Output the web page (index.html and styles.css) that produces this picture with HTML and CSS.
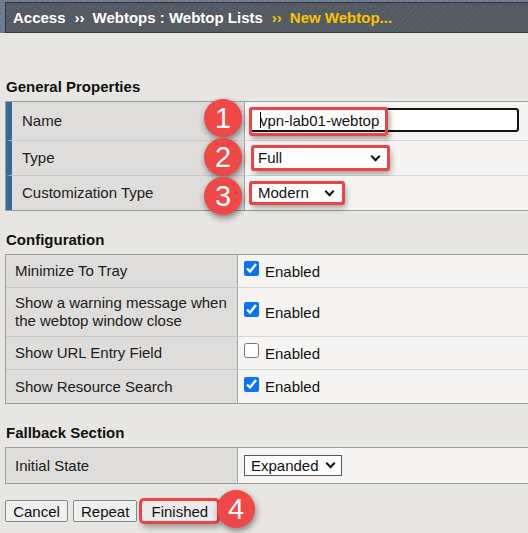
FILE: index.html
```html
<!DOCTYPE html>
<html>
<head>
<meta charset="utf-8">
<title>New Webtop</title>
<link rel="stylesheet" href="styles.css">
</head>
<body>
<header class="topbar">
  <div class="crumbs">
    <span>Access</span><span class="sep">››</span><span>Webtops : Webtop Lists</span><span class="sep cur">››</span><span class="cur">New Webtop...</span>
  </div>
</header>

<main class="content">
  <h2 class="sec sec-first">General Properties</h2>
  <div class="ptable general">
    <div class="lab">Name</div>
    <div class="val">
      <div class="namebox">
        <input class="txt" type="text" value="vpn-lab01-webtop">
        <span class="caret"></span>
        <span class="hl hl-name"></span>
      </div>
    </div>
    <div class="lab">Type</div>
    <div class="val">
      <div class="sel sel-type ring"><span>Full</span><i class="chev"></i></div>
    </div>
    <div class="lab last">Customization Type</div>
    <div class="val last">
      <div class="sel sel-cust ring"><span>Modern</span><i class="chev"></i></div>
    </div>
  </div>

  <h2 class="sec">Configuration</h2>
  <div class="ptable config">
    <div class="lab">Minimize To Tray</div>
    <div class="val"><label class="chk"><input type="checkbox" checked><span>Enabled</span></label></div>
    <div class="lab">Show a warning message when the webtop window close</div>
    <div class="val"><label class="chk"><input type="checkbox" checked><span>Enabled</span></label></div>
    <div class="lab">Show URL Entry Field</div>
    <div class="val"><label class="chk"><input type="checkbox"><span>Enabled</span></label></div>
    <div class="lab last">Show Resource Search</div>
    <div class="val last"><label class="chk"><input type="checkbox" checked><span>Enabled</span></label></div>
  </div>

  <h2 class="sec">Fallback Section</h2>
  <div class="ptable fallback">
    <div class="lab last">Initial State</div>
    <div class="val last">
      <div class="sel sel-exp"><span>Expanded</span><i class="chev"></i></div>
    </div>
  </div>

  <div class="buttons">
    <button class="btn btn-cancel">Cancel</button>
    <button class="btn">Repeat</button>
    <button class="btn btn-fin ring">Finished</button>
  </div>
</main>

<span class="badge b1">1</span>
<span class="badge b2">2</span>
<span class="badge b3">3</span>
<span class="badge b4">4</span>
</body>
</html>
```

FILE: styles.css
```css
* { box-sizing: border-box; }

html, body {
  margin: 0;
  overflow: hidden;
}

body {
  position: relative;
  width: 528px;
  height: 533px;
  background: #e7e6e3;
  font-family: "Liberation Sans", Arial, sans-serif;
  font-size: 15px;
  color: #1e1e1e;
}

/* ---------- top bar ---------- */
.topbar {
  height: 33px;
  padding: 2px 0 0 5px;
  background-color: #6a7b8d;
  background-image: repeating-linear-gradient(135deg, rgba(255,255,255,0.06) 0 1px, transparent 1px 4px);
}

.crumbs {
  height: 31px;
  width: 540px;
  border: 1px solid #30353b;
  border-right: none;
  padding-left: 7px;
  background-color: #545a62;
  background-image: repeating-linear-gradient(135deg, rgba(255,255,255,0.035) 0 1px, transparent 1px 4px);
  color: #ffffff;
  font-weight: bold;
  font-size: 15px;
  line-height: 29px;
  white-space: nowrap;
}

.crumbs .sep {
  margin: 0 8px 0 9px;
}

.crumbs .cur {
  color: #f8c500;
}

/* ---------- content ---------- */
.content {
  padding-left: 5px;
}

.sec {
  margin: 20px 0 5px 1px;
  font-size: 15px;
  line-height: 18px;
  font-weight: bold;
  color: #111;
}

.sec-first {
  margin-top: 45px;
}

.ptable {
  display: grid;
  width: 530px;
  border: 1px solid #9d9d9d;
  border-right: none;
}

.general { grid-template-columns: 239px 1fr; grid-template-rows: 39px 35px 34px; }
.config  { grid-template-columns: 232px 1fr; grid-template-rows: 33px 49px 33px 33px; }
.fallback { grid-template-columns: 232px 1fr; grid-template-rows: 35px; }

.lab {
  display: flex;
  align-items: center;
  background: #dedddb;
  border-right: 1px solid #a6a6a6;
  border-bottom: 1px solid #c9c9c9;
  padding-left: 9px;
  line-height: 18px;
  color: #202020;
}

.general .lab {
  border-left: 6px solid #376896;
  padding-left: 10px;
}

.val {
  display: flex;
  align-items: center;
  background: #f6f5f3;
  border-bottom: 1px solid #d6d6d6;
}

.lab.last, .val.last { border-bottom: none; }

/* name input */
.namebox {
  position: relative;
  margin-left: 4px;
  margin-top: -2px;
}

.txt {
  display: block;
  width: 270px;
  height: 24px;
  border: 2px solid #141414;
  border-radius: 3px;
  padding: 0 0 0 9px;
  font-family: "Liberation Sans", Arial, sans-serif;
  font-size: 15px;
  color: #111;
  background: #fff;
}

.caret {
  position: absolute;
  left: 11px;
  top: 4px;
  width: 1px;
  height: 16px;
  background: #000;
}

.hl {
  position: absolute;
  border: 3px solid #ec4444;
  border-radius: 3px;
  box-shadow: 2px 3px 5px rgba(0,0,0,0.35);
}

.hl-name {
  left: 0;
  top: -1px;
  width: 139px;
  height: 29px;
}

/* selects */
.sel {
  display: flex;
  align-items: center;
  justify-content: space-between;
  background: #fff;
  font-size: 15px;
  color: #111;
  line-height: 18px;
}

.ring {
  box-shadow: 0 0 0 3px #ec4444, 2px 4px 6px 2px rgba(0,0,0,0.35);
  border-radius: 1px;
}

.sel-type {
  margin-left: 9px;
  width: 133px;
  height: 20px;
  padding: 0 5px 0 4px;
}

.sel-cust {
  margin-left: 7px;
  width: 90px;
  height: 18px;
  padding: 0 6px 0 6px;
}

.sel-exp {
  margin-left: 6px;
  width: 98px;
  height: 21px;
  border: 1px solid #5a5a5a;
  padding: 0 4px 0 6px;
}

.chev {
  display: block;
  width: 7px;
  height: 7px;
  margin-right: 3px;
  margin-top: -4px;
  border-right: 2px solid #111;
  border-bottom: 2px solid #111;
  transform: rotate(45deg);
}

/* checkboxes */
.chk {
  display: flex;
  align-items: center;
  color: #111;
}

.chk input {
  width: 15px;
  height: 15px;
  margin: 0 6px 5px 6px;
  accent-color: #0b73f6;
}

/* buttons */
.buttons {
  display: flex;
  align-items: flex-start;
  gap: 5px;
  margin-top: 16px;
}

.btn {
  height: 22px;
  padding: 0 7px;
  border: 1px solid #888;
  border-radius: 2px;
  background: #efefef;
  font-family: "Liberation Sans", Arial, sans-serif;
  font-size: 15px;
  color: #111;
}

.btn-cancel {
  width: 63px;
  padding: 0;
}

.btn-fin {
  width: 75px;
  height: 20px;
  margin-top: 1px;
  padding: 0;
  border: none;
  background: #ebebeb;
}

/* number badges */
.badge {
  position: absolute;
  width: 38px;
  height: 38px;
  border-radius: 50%;
  background: #f04747;
  color: #fff;
  font-size: 29px;
  line-height: 38px;
  text-align: center;
  box-shadow: 1px 3px 6px rgba(0,0,0,0.45);
}

.b1 { left: 204px; top: 99px; }
.b2 { left: 204px; top: 138px; }
.b3 { left: 204px; top: 177px; }
.b4 { left: 217px; top: 490px; }
```
